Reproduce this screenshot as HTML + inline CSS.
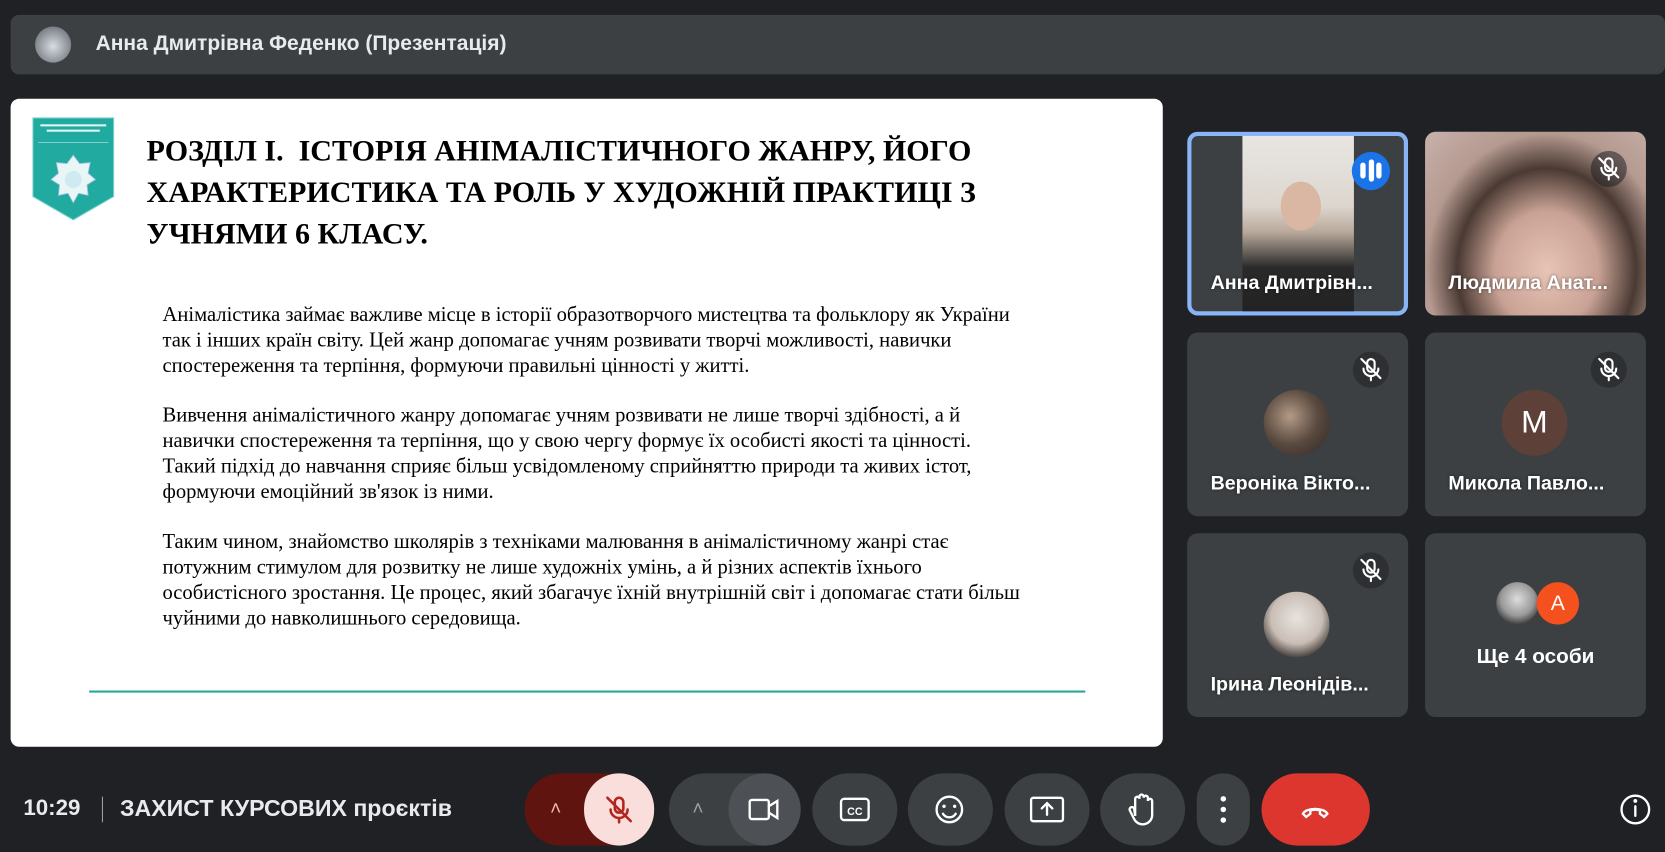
<!DOCTYPE html>
<html><head><meta charset="utf-8"><style>
html,body{margin:0;padding:0;background:#202124;overflow:hidden;width:1665px;height:852px}
#w{position:absolute;left:0;top:0;width:1568px;height:802px;transform:scale(1.0619,1.0623);transform-origin:0 0;font-family:"Liberation Sans",sans-serif;color:#fff}
.a{position:absolute}
.tile{position:absolute;width:208px;height:173px;background:#3c4043;border-radius:10px;overflow:hidden}
.nm{position:absolute;left:22px;bottom:20px;font-size:18.5px;font-weight:bold;color:#fff;white-space:nowrap;text-shadow:0 0 3px rgba(0,0,0,.5)}
.mic{position:absolute;right:18px;top:18px;width:34px;height:34px;border-radius:50%;background:rgba(32,33,36,.55)}
.btn{position:absolute;top:728px;height:68px;border-radius:34px;background:#3c4043}
.sl{font-family:"Liberation Serif",serif;color:#000;white-space:nowrap}
</style></head><body><div id="w">
<div class="a" style="left:10px;top:14px;width:1558px;height:56px;background:#3c4043;border-radius:8px"></div>
<div class="a" style="left:33px;top:25px;width:34px;height:34px;border-radius:50%;background:radial-gradient(circle at 50% 55%,#d9dde2 0,#8a8f96 60%,#5a5f66 100%)"></div>
<div class="a" style="left:90px;top:30px;font-size:19.8px;font-weight:bold;color:#e8eaed">Анна Дмитрівна Феденко (Презентація)</div>

<div class="a" style="left:10px;top:93px;width:1085px;height:610px;background:#fff;border-radius:8px"></div>
<svg class="a" style="left:30px;top:110px" width="78" height="98" viewBox="0 0 78 98"><path d="M1 1H77V75L39 97L1 75Z" fill="#20aaa0" stroke="#7fd2cc" stroke-width="1"/><line x1="6" y1="24" x2="72" y2="24" stroke="#bfeae6" stroke-width=".6"/><rect x="8" y="7" width="62" height="2" fill="#e0f5f3"/><rect x="14" y="12" width="50" height="2" fill="#e0f5f3"/><polygon points="39,36 45,44 55,43 53,53 60,59 52,64 53,74 44,72 39,81 34,72 25,74 26,64 18,59 25,53 23,43 33,44" fill="#e9f6f6" stroke="#9bd" stroke-width=".8"/><circle cx="39" cy="59" r="8" fill="#cfeaf0"/></svg>
<div class="a sl" style="left:138px;top:123px;font-size:28.3px;font-weight:bold;line-height:39px">РОЗДІЛ І.&nbsp; ІСТОРІЯ АНІМАЛІСТИЧНОГО ЖАНРУ, ЙОГО<br>ХАРАКТЕРИСТИКА ТА РОЛЬ У ХУДОЖНІЙ ПРАКТИЦІ З<br>УЧНЯМИ 6 КЛАСУ.</div>
<div class="a sl" style="left:153px;top:285px;font-size:19.4px;line-height:23.8px">Анімалістика займає важливе місце в історії образотворчого мистецтва та фольклору як України<br>так і інших країн світу. Цей жанр допомагає учням розвивати творчі можливості, навички<br>спостереження та терпіння, формуючи правильні цінності у житті.<br><br>Вивчення анімалістичного жанру допомагає учням розвивати не лише творчі здібності, а й<br>навички спостереження та терпіння, що у свою чергу формує їх особисті якості та цінності.<br>Такий підхід до навчання сприяє більш усвідомленому сприйняттю природи та живих істот,<br>формуючи емоційний зв'язок із ними.<br><br>Таким чином, знайомство школярів з техніками малювання в анімалістичному жанрі стає<br>потужним стимулом для розвитку не лише художніх умінь, а й різних аспектів їхнього<br>особистісного зростання. Це процес, який збагачує їхній внутрішній світ і допомагає стати більш<br>чуйними до навколишнього середовища.</div>
<div class="a" style="left:84px;top:650px;width:938px;height:2px;background:#2aa5a0"></div>

<div class="tile" style="left:1118px;top:124px;box-shadow:inset 0 0 0 4px #8ab4f8">
 <div class="a" style="left:52px;top:4px;width:105px;height:165px;background:linear-gradient(180deg,#e8e6e2 0,#ddd6cf 40%,#b8a89a 55%,#2a2a2a 75%,#222 100%)"></div>
 <div class="a" style="left:88px;top:47px;width:38px;height:46px;border-radius:50%;background:#d9b7a3"></div>
 <div class="a" style="left:155px;top:19px;width:36px;height:36px;border-radius:50%;background:#1a73e8"></div>
 <div class="a" style="left:163px;top:29px;width:5px;height:15px;border-radius:3px;background:#fff"></div>
 <div class="a" style="left:170.5px;top:26px;width:5px;height:21px;border-radius:3px;background:#fff"></div>
 <div class="a" style="left:178px;top:29px;width:5px;height:15px;border-radius:3px;background:#fff"></div>
 <div class="nm">Анна Дмитрівн...</div>
</div>
<div class="tile" style="left:1342px;top:124px;background:radial-gradient(ellipse at 55% 75%,#e6c4b6 0,#c9a295 30%,#4a3a33 52%,#b59a90 70%,#c7b2ac 100%)">
 <div class="mic"></div><div class="nm">Людмила Анат...</div>
</div>
<div class="tile" style="left:1118px;top:313px"><div class="mic"></div>
 <div class="a" style="left:72px;top:54px;width:62px;height:62px;border-radius:50%;background:radial-gradient(circle at 40% 40%,#b39a85 0,#5a4a40 50%,#2e2620 100%)"></div>
 <div class="nm">Вероніка Вікто...</div></div>
<div class="tile" style="left:1342px;top:313px"><div class="mic"></div>
 <div class="a" style="left:72px;top:54px;width:62px;height:62px;border-radius:50%;background:#5d4037;font-size:30px;line-height:62px;text-align:center">M</div>
 <div class="nm">Микола Павло...</div></div>
<div class="tile" style="left:1118px;top:502px"><div class="mic"></div>
 <div class="a" style="left:72px;top:55px;width:62px;height:62px;border-radius:50%;background:radial-gradient(circle at 50% 40%,#e8e2de 0,#c9beb6 50%,#3a3330 80%,#ddd 100%)"></div>
 <div class="nm">Ірина Леонідів...</div></div>
<div class="tile" style="left:1342px;top:502px">
 <div class="a" style="left:67px;top:46px;width:40px;height:40px;border-radius:50%;background:radial-gradient(circle at 50% 40%,#ddd 0,#999 50%,#333 80%)"></div>
 <div class="a" style="left:105px;top:46px;width:40px;height:40px;border-radius:50%;background:#f4511e;font-size:20px;line-height:40px;text-align:center">A</div>
 <div class="a" style="left:0;width:208px;top:105px;text-align:center;font-size:19.5px;font-weight:bold">Ще 4 особи</div></div>

<div class="a" style="left:22px;top:749px;font-size:21px;font-weight:bold;color:#e8eaed">10:29</div>
<div class="a" style="left:96px;top:750px;width:1px;height:24px;background:#9aa0a6"></div>
<div class="a" style="left:113px;top:748px;font-size:21.8px;font-weight:bold;color:#e8eaed">ЗАХИСТ КУРСОВИХ проєктів</div>

<div class="btn" style="left:494px;width:122px;background:#601410"></div>
<div class="btn" style="left:550px;width:66px;background:#f9dedc"></div>
<div class="a" style="left:518px;top:751px;font-size:18px;color:#f2b8b5">&#708;</div>
<div class="btn" style="left:630px;width:124px"></div>
<div class="btn" style="left:686px;width:68px;background:#4d5155"></div>
<div class="a" style="left:652px;top:751px;font-size:18px;color:#9aa0a6">&#708;</div>
<div class="btn" style="left:765px;width:80px"></div>
<div class="btn" style="left:855px;width:80px"></div>
<div class="btn" style="left:946px;width:80px"></div>
<div class="btn" style="left:1036px;width:80px"></div>
<div class="btn" style="left:1127px;width:50px"></div>
<div class="btn" style="left:1188px;width:102px;background:#dc362e"></div>
<svg class="a" style="left:0;top:0" width="1568" height="802" fill="none" stroke-linecap="round">
 <g stroke="#fff" stroke-width="2">
  <g transform="translate(1515,158)"><rect x="-3.5" y="-9" width="7" height="12" rx="3.5"/><path d="M-7 0a7 7 0 0 0 14 0M0 7v4M-9 -9L9 9"/></g>
  <g transform="translate(1291,347)"><rect x="-3.5" y="-9" width="7" height="12" rx="3.5"/><path d="M-7 0a7 7 0 0 0 14 0M0 7v4M-9 -9L9 9"/></g>
  <g transform="translate(1515,347)"><rect x="-3.5" y="-9" width="7" height="12" rx="3.5"/><path d="M-7 0a7 7 0 0 0 14 0M0 7v4M-9 -9L9 9"/></g>
  <g transform="translate(1291,536)"><rect x="-3.5" y="-9" width="7" height="12" rx="3.5"/><path d="M-7 0a7 7 0 0 0 14 0M0 7v4M-9 -9L9 9"/></g>
 </g>
 <g transform="translate(583,762)" stroke="#b3261e" stroke-width="2.4"><rect x="-4" y="-11" width="8" height="14" rx="4"/><path d="M-8 0a8 8 0 0 0 16 0M0 8v4M-11 -11L11 11"/></g>
 <g stroke="#fff" stroke-width="2.2">
  <rect x="706" y="753" width="18" height="18" rx="2"/><path d="M724 759l8-5v16l-8-5"/>
  <rect x="792" y="752" width="26" height="20" rx="3"/>
  <circle cx="894" cy="762" r="12"/><path d="M888 766a7 7 0 0 0 12 0"/>
  <rect x="971" y="751" width="30" height="22" rx="2"/><path d="M986 767v-10M981 761l5-5 5 5"/>
  <path d="M1069 768v-16a2 2 0 0 1 4 0v-2a2 2 0 0 1 4 0v1a2 2 0 0 1 4 0v3a2 2 0 0 1 4 0v14a9 9 0 0 1-17 3l-4-8a2 2 0 0 1 4-2z"/>
  <path d="M1227 766c3-6 20-6 23 0l-3 3-4-3v-3c-3-1-6-1-9 0v3l-4 3z"/>
  <circle cx="1540" cy="762" r="13"/><path d="M1540 759v9"/>
 </g>
 <g fill="#fff"><circle cx="1152" cy="752" r="2.6"/><circle cx="1152" cy="762" r="2.6"/><circle cx="1152" cy="772" r="2.6"/><circle cx="1540" cy="754" r="1.8"/></g>
 <text x="805" y="767" fill="#fff" font-family="Liberation Sans" font-size="10" font-weight="bold" text-anchor="middle">CC</text>
 <g fill="#fff"><circle cx="889" cy="759" r="1.6"/><circle cx="899" cy="759" r="1.6"/></g>
</svg>
</div></body></html>
